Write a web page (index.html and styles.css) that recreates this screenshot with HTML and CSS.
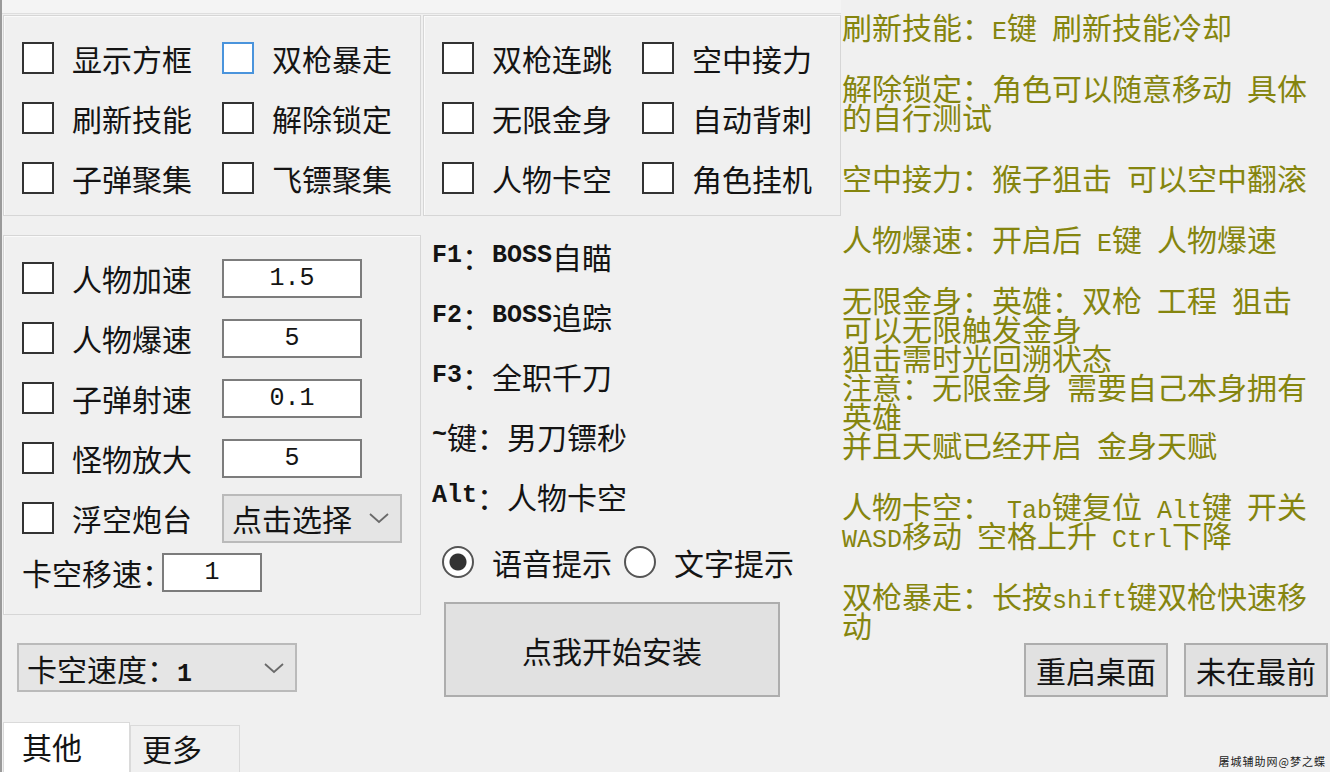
FILE: index.html
```html
<!DOCTYPE html>
<html lang="zh-CN">

<head>
    <meta charset="UTF-8">
    <meta name="viewport" content="width=device-width, initial-scale=1.0">
    <title>辅助设置</title>
    <link rel="stylesheet" href="styles.css">
</head>

<body>
    <div class="window">
        <div class="left">
            <div class="top_strip"></div>

            <!-- 上面两组开关 -->
            <div class="row_top">
                <div class="group">
                    <div class="check_grid">
                        <label class="check"><input type="checkbox" class="chk">显示方框</label>
                        <label class="check"><input type="checkbox" class="chk focus">双枪暴走</label>
                        <label class="check"><input type="checkbox" class="chk">刷新技能</label>
                        <label class="check"><input type="checkbox" class="chk">解除锁定</label>
                        <label class="check"><input type="checkbox" class="chk">子弹聚集</label>
                        <label class="check"><input type="checkbox" class="chk">飞镖聚集</label>
                    </div>
                </div>
                <div class="group">
                    <div class="check_grid">
                        <label class="check"><input type="checkbox" class="chk">双枪连跳</label>
                        <label class="check"><input type="checkbox" class="chk">空中接力</label>
                        <label class="check"><input type="checkbox" class="chk">无限金身</label>
                        <label class="check"><input type="checkbox" class="chk">自动背刺</label>
                        <label class="check"><input type="checkbox" class="chk">人物卡空</label>
                        <label class="check"><input type="checkbox" class="chk">角色挂机</label>
                    </div>
                </div>
            </div>

            <div class="row_bottom">
                <div class="col_left">
                    <div class="group tall">
                        <div class="opt_row">
                            <input type="checkbox" class="chk"><span class="opt_label">人物加速</span>
                            <input type="text" class="num" value="1.5">
                        </div>
                        <div class="opt_row">
                            <input type="checkbox" class="chk"><span class="opt_label">人物爆速</span>
                            <input type="text" class="num" value="5">
                        </div>
                        <div class="opt_row">
                            <input type="checkbox" class="chk"><span class="opt_label">子弹射速</span>
                            <input type="text" class="num" value="0.1">
                        </div>
                        <div class="opt_row">
                            <input type="checkbox" class="chk"><span class="opt_label">怪物放大</span>
                            <input type="text" class="num" value="5">
                        </div>
                        <div class="opt_row">
                            <input type="checkbox" class="chk"><span class="opt_label">浮空炮台</span>
                            <div class="combo">
                                <span>点击选择</span>
                                <svg width="22" height="12" viewBox="0 0 22 12"><path d="M2 2 L11 10 L20 2" fill="none" stroke="#6a6a6a" stroke-width="1.8"/></svg>
                            </div>
                        </div>
                        <div class="move_row">
                            <span class="move_label">卡空移速：</span>
                            <input type="text" class="num small" value="1">
                        </div>
                    </div>

                    <div class="combo speed">
                        <span>卡空速度：<span class="en">1</span></span>
                        <svg width="22" height="12" viewBox="0 0 22 12"><path d="M2 2 L11 10 L20 2" fill="none" stroke="#6a6a6a" stroke-width="1.8"/></svg>
                    </div>

                    <div class="tabs">
                        <div class="tab active">其他</div>
                        <div class="tab">更多</div>
                    </div>
                </div>

                <div class="col_mid">
                    <div class="hot"><span class="en">F1</span>：<span class="en">BOSS</span>自瞄</div>
                    <div class="hot"><span class="en">F2</span>：<span class="en">BOSS</span>追踪</div>
                    <div class="hot"><span class="en">F3</span>：全职千刀</div>
                    <div class="hot"><span class="en">~</span>键：男刀镖秒</div>
                    <div class="hot"><span class="en">Alt</span>：人物卡空</div>

                    <div class="radio_row">
                        <label class="radio"><input type="radio" name="tip" class="rad" checked>语音提示</label>
                        <label class="radio"><input type="radio" name="tip" class="rad">文字提示</label>
                    </div>

                    <button class="btn install">点我开始安装</button>
                </div>
            </div>
        </div>

        <!-- 右边说明文字 -->
        <div class="right">
            <div class="notes">
                <p>刷新技能：<span class="en">E</span>键&ensp;刷新技能冷却</p>
                <p>解除锁定：角色可以随意移动&ensp;具体<br>的自行测试</p>
                <p>空中接力：猴子狙击&ensp;可以空中翻滚</p>
                <p>人物爆速：开启后&ensp;<span class="en">E</span>键&ensp;人物爆速</p>
                <p>无限金身：英雄：双枪&ensp;工程&ensp;狙击<br>可以无限触发金身<br>狙击需时光回溯状态<br>注意：无限金身&ensp;需要自己本身拥有<br>英雄<br>并且天赋已经开启&ensp;金身天赋</p>
                <p>人物卡空：&ensp;<span class="en">Tab</span>键复位&ensp;<span class="en">Alt</span>键&ensp;开关<br><span class="en">WASD</span>移动&ensp;空格上升&ensp;<span class="en">Ctrl</span>下降</p>
                <p>双枪暴走：长按<span class="en">shift</span>键双枪快速移<br>动</p>
            </div>
            <div class="btn_row">
                <button class="btn small_btn">重启桌面</button>
                <button class="btn small_btn">未在最前</button>
            </div>
        </div>

        <div class="mark">屠城辅助网@梦之蝶</div>
    </div>
</body>

</html>
```

FILE: styles.css
```css
body {
    margin: 0;
    background-color: #f0f0f0;
    font-family: "Noto Sans CJK SC", sans-serif;
    font-size: 30px;
    color: #141414;
}

.window {
    position: relative;
    display: flex;
    width: 1330px;
    height: 772px;
    box-sizing: border-box;
    border-left: 2px solid #9a9a9a;
    overflow: hidden;
}

/* 半角字母数字 */
.en {
    font-family: "Liberation Mono", monospace;
    font-size: 25px;
    font-weight: bold;
    line-height: 0;
}

.left {
    width: 839px;
    flex: none;
}

.top_strip {
    height: 13px;
    background-color: #f4f4f4;
    border-bottom: 1px solid #dedede;
}

.row_top,
.row_bottom {
    display: flex;
    gap: 2px;
    padding-left: 1px;
}

.row_top {
    margin-top: 1px;
}

.group {
    width: 418px;
    box-sizing: border-box;
    border: 1px solid #d6d6d6;
    box-shadow: inset 1px 1px 0 #fafafa;
    padding: 12px 0 7px 18px;
}

.check_grid {
    display: grid;
    grid-template-columns: 200px 200px;
    grid-auto-rows: 60px;
}

.check {
    display: flex;
    align-items: center;
}

/* 方框 */
.chk {
    appearance: none;
    width: 32px;
    height: 32px;
    margin: 0 18px 0 0;
    box-sizing: border-box;
    border: 2px solid #333;
    background-color: #fff;
    flex: none;
}

.chk.focus {
    border-color: #4a94dc;
}

.group.tall {
    margin-top: 19px;
    padding: 12px 0 18px 18px;
}

.opt_row {
    display: flex;
    align-items: center;
    height: 60px;
}

.opt_label {
    width: 150px;
    flex: none;
}

.num {
    width: 140px;
    height: 39px;
    box-sizing: border-box;
    border: 2px solid #7c7c7c;
    background-color: #fff;
    padding: 0;
    text-align: center;
    font-family: "Liberation Mono", monospace;
    font-size: 25px;
    color: #141414;
}

.num.small {
    width: 100px;
}

.move_row {
    display: flex;
    align-items: center;
    height: 48px;
}

.move_label {
    font-feature-settings: "halt";
    margin-right: 5px;
}

.combo {
    display: flex;
    align-items: center;
    justify-content: space-between;
    width: 180px;
    height: 49px;
    box-sizing: border-box;
    padding: 0 10px 0 8px;
    background-color: #e5e5e5;
    border: 2px solid #bababa;
}

.combo.speed {
    width: 280px;
    margin: 28px 0 0 14px;
}

.tabs {
    display: flex;
    align-items: flex-end;
    height: 50px;
    margin-top: 30px;
}

.tab {
    width: 110px;
    height: 47px;
    box-sizing: border-box;
    padding-left: 11px;
    line-height: 44px;
    border: 1px solid #dadada;
    border-bottom: none;
}

.tab.active {
    width: 127px;
    height: 50px;
    padding-left: 18px;
    line-height: 46px;
    background-color: #fff;
}

.col_mid {
    width: 418px;
    box-sizing: border-box;
    padding: 10px 0 0 9px;
}

.hot {
    display: flex;
    align-items: center;
    height: 60px;
    white-space: nowrap;
}

.radio_row {
    display: flex;
    align-items: center;
    height: 60px;
    margin: 6px 0 0 10px;
}

.radio {
    display: flex;
    align-items: center;
}

.radio + .radio {
    margin-left: 12px;
}

.rad {
    appearance: none;
    width: 32px;
    height: 32px;
    margin: 0 18px 0 0;
    box-sizing: border-box;
    border: 2px solid #555;
    border-radius: 50%;
    background-color: #fff;
}

.rad:checked {
    background: radial-gradient(circle, #333 0 8px, #fff 9px);
}

.btn {
    font-family: "Noto Sans CJK SC", sans-serif;
    font-size: 30px;
    color: #141414;
    background-color: #e1e1e1;
    border: 2px solid #adadad;
    padding: 0;
}

.install {
    display: block;
    width: 336px;
    height: 95px;
    margin: 10px 0 0 12px;
}

.right {
    flex: 1;
    padding: 12px 2px 0 1px;
}

.notes {
    color: #85850e;
}

.notes p {
    margin: 0 0 32px;
    line-height: 29px;
    white-space: nowrap;
}

.notes p:last-child {
    margin-bottom: 0;
}

.notes .en {
    font-weight: normal;
}

.btn_row {
    display: flex;
    justify-content: flex-end;
    gap: 16px;
    margin-top: 4px;
}

.small_btn {
    width: 144px;
    height: 54px;
}

.mark {
    position: absolute;
    right: 4px;
    bottom: 3px;
    font-size: 11px;
    color: #222;
    letter-spacing: 1px;
}
```
